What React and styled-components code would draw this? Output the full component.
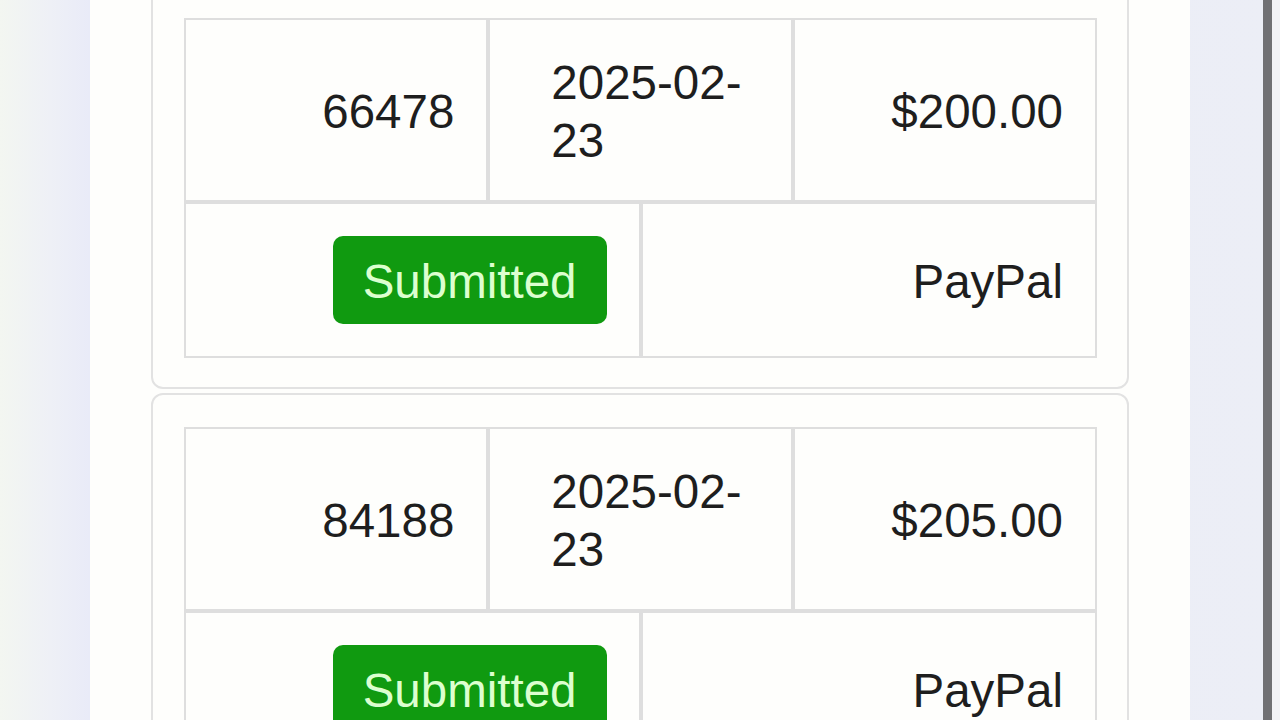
import React from "react";
import styled, { createGlobalStyle } from "styled-components";

const Global = createGlobalStyle`
  html, body {
    margin: 0;
    padding: 0;
    height: 100%;
    overflow: hidden;
  }
  body {
    background: linear-gradient(to right, #f3f6f1 0px, #eef0f6 50px, #e9ebf8 90px, #eceef6 100%);
    font-family: "Liberation Sans", Arial, Helvetica, sans-serif;
    color: #1e1e1e;
  }
  *, *::before, *::after { box-sizing: border-box; }
`;

const Viewport = styled.div`
  position: relative;
  width: 1280px;
  height: 720px;
  overflow: hidden;
`;

const Panel = styled.main`
  width: 1100px;
  min-height: 760px;
  margin-left: 90px;
  margin-top: -16px;
  background: #fefefc;
  padding: 0 61px;
  display: flex;
  flex-direction: column;
  gap: 4px;
`;

const Card = styled.section`
  border: 2px solid #e2e2e2;
  border-radius: 12px;
  background: #fefefc;
  padding: 32px 30px 29px 31px;
`;

const Table = styled.div`
  display: flex;
  flex-direction: column;
`;

const Row = styled.div`
  display: grid;
  grid-template-columns: repeat(${(p) => p.$cols}, minmax(0, 1fr));
`;

const Cell = styled.div`
  border: 2px solid #dedede;
  padding: ${(p) =>
    p.$badge ? "32px" : p.$left ? "34px 32px 30px 61px" : "34px 32px 30px"};
  display: flex;
  align-items: center;
  justify-content: ${(p) => (p.$left ? "flex-start" : "flex-end")};
  text-align: ${(p) => (p.$left ? "left" : "right")};
  font-size: 47.5px;
  line-height: 58px;
  color: #1e1e1e;
`;

const Status = styled.span`
  display: inline-block;
  background: #109a10;
  color: #dcffcf;
  border-radius: 10px;
  padding: 17px 30px 13px;
  font-size: 47.5px;
  line-height: 58px;
`;

const ScrollThumb = styled.div`
  position: absolute;
  top: 0;
  right: 8px;
  width: 9px;
  height: 720px;
  background: #707074;
`;

const ScrollTrack = styled.div`
  position: absolute;
  top: 0;
  right: 0;
  width: 8px;
  height: 720px;
  background: #f2f2f6;
`;

const payments = [
  { id: "66478", date: "2025-02-23", amount: "$200.00", status: "Submitted", method: "PayPal" },
  { id: "84188", date: "2025-02-23", amount: "$205.00", status: "Submitted", method: "PayPal" },
];

function PaymentCard({ p }) {
  const d1 = p.date.slice(0, 8);
  const d2 = p.date.slice(8);
  return (
    <Card>
      <Table>
        <Row $cols={3}>
          <Cell>{p.id}</Cell>
          <Cell $left>
            <span>
              {d1}
              <br />
              {d2}
            </span>
          </Cell>
          <Cell>{p.amount}</Cell>
        </Row>
        <Row $cols={2}>
          <Cell $badge>
            <Status>{p.status}</Status>
          </Cell>
          <Cell>{p.method}</Cell>
        </Row>
      </Table>
    </Card>
  );
}

export default function App() {
  return (
    <Viewport>
      <Global />
      <Panel>
        {payments.map((p) => (
          <PaymentCard key={p.id} p={p} />
        ))}
      </Panel>
      <ScrollTrack />
      <ScrollThumb />
    </Viewport>
  );
}
